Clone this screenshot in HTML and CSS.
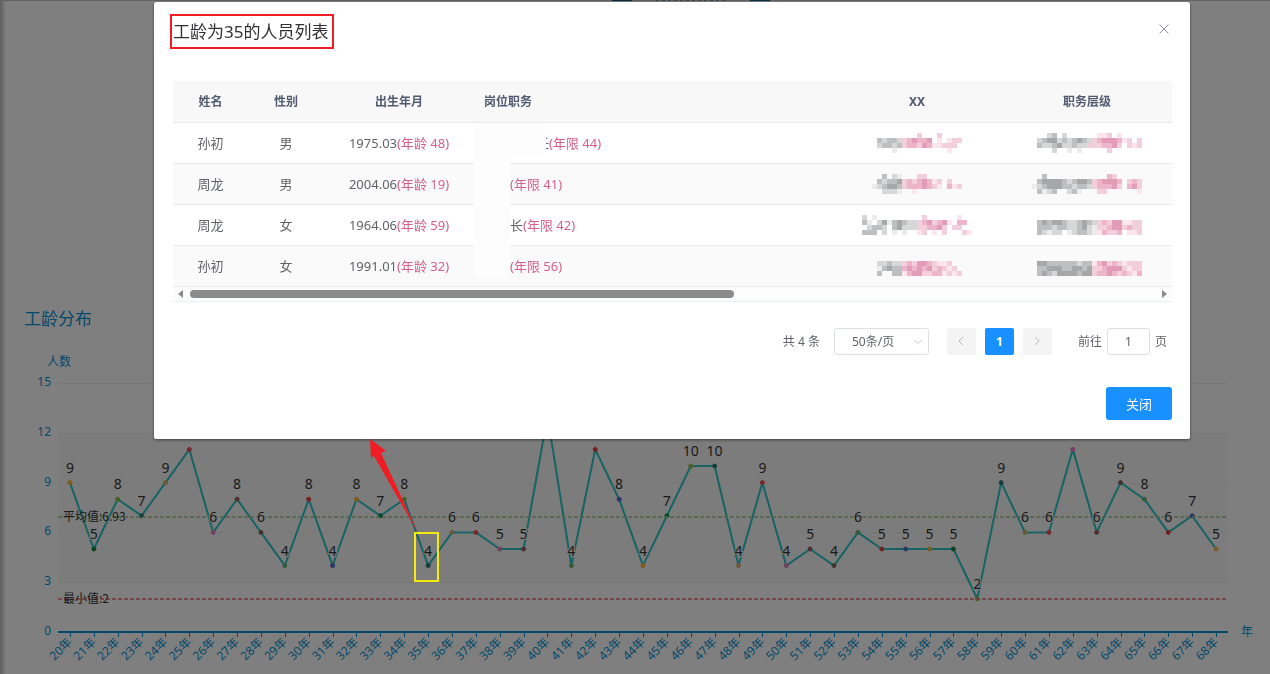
FILE: index.html
```html
<!DOCTYPE html>
<html lang="zh-CN">
<head>
<meta charset="utf-8">
<title>工龄分布</title>
<link rel="stylesheet" href="styles.css">
</head>
<body>
<main class="dashboard">
  <div class="banner-edge"><i class="tab"></i><i class="ticks"></i><i class="tab"></i></div>
  <section class="panel">
    <h2 class="panel-title">工龄分布</h2>
    <svg class="chart" id="chart" role="img" aria-label="工龄分布折线图"></svg>
  </section>
</main>

<div class="overlay">
  <div class="dialog" role="dialog" aria-modal="true" aria-labelledby="dialog-title">
    <header class="dialog-header">
      <h1 class="dialog-title" id="dialog-title">工龄为35的人员列表</h1>
      <button class="dialog-close" type="button" aria-label="关闭窗口">
        <svg width="12" height="12" viewBox="0 0 12 12"><path d="M1.5 1.5 10.5 10.5M10.5 1.5 1.5 10.5"/></svg>
      </button>
    </header>

    <div class="table-wrap">
      <table class="people">
        <colgroup><col class="c-name"><col class="c-sex"><col class="c-birth"><col class="c-post"><col class="c-xx"><col class="c-level"></colgroup>
        <thead>
          <tr><th>姓名</th><th>性别</th><th>出生年月</th><th class="left">岗位职务</th><th>XX</th><th>职务层级</th></tr>
        </thead>
        <tbody>
          <tr><td>孙初</td><td>男</td><td>1975.03<em>(年龄 48)</em></td><td class="left"><span class="post wide">任</span><em>(年限 44)</em></td><td><svg class="mosaic" data-key="x1"></svg></td><td><svg class="mosaic" data-key="l1"></svg></td></tr>
          <tr><td>周龙</td><td>男</td><td>2004.06<em>(年龄 19)</em></td><td class="left"><span class="post">长</span><em>(年限 41)</em></td><td><svg class="mosaic" data-key="x2"></svg></td><td><svg class="mosaic" data-key="l2"></svg></td></tr>
          <tr><td>周龙</td><td>女</td><td>1964.06<em>(年龄 59)</em></td><td class="left"><span class="post"></span>长<em>(年限 42)</em></td><td><svg class="mosaic" data-key="x3"></svg></td><td><svg class="mosaic" data-key="l3"></svg></td></tr>
          <tr><td>孙初</td><td>女</td><td>1991.01<em>(年龄 32)</em></td><td class="left"><span class="post">长</span><em>(年限 56)</em></td><td><svg class="mosaic" data-key="x4"></svg></td><td><svg class="mosaic" data-key="l4"></svg></td></tr>
        </tbody>
      </table>
      <div class="eraser tall"></div>
      <div class="eraser long"></div>
      <div class="scrollbar">
        <svg width="6" height="8" viewBox="0 0 6 8"><path d="M5 0V8L0 4Z"/></svg>
        <div class="track"><div class="thumb"></div></div>
        <svg width="6" height="8" viewBox="0 0 6 8"><path d="M1 0V8L6 4Z"/></svg>
      </div>
    </div>

    <nav class="pager" aria-label="分页">
      <span class="total">共 4 条</span>
      <span class="size-box">
        <select class="size" aria-label="每页条数"><option>50条/页</option></select>
        <svg width="8" height="6" viewBox="0 0 8 6"><path d="M0.5 1 4 4.5 7.5 1"/></svg>
      </span>
      <button class="page" type="button" aria-label="上一页"><svg width="6" height="10" viewBox="0 0 6 10"><path d="M5 1 1 5 5 9"/></svg></button>
      <button class="page current" type="button">1</button>
      <button class="page" type="button" aria-label="下一页"><svg width="6" height="10" viewBox="0 0 6 10"><path d="M1 1 5 5 1 9"/></svg></button>
      <label class="jump">前往<input type="text" value="1">页</label>
    </nav>

    <footer class="dialog-footer"><button class="primary" type="button">关闭</button></footer>
  </div>
</div>

<div class="focus-box"></div>
<svg class="arrow" width="52" height="96" viewBox="0 0 52 96"><path d="M0 0 16 12 11 14 48 94 4 17 1 19Z"/></svg>
<script src="main.js"></script>
</body>
</html>
```

FILE: styles.css
```css
* { box-sizing: border-box; }
body {
  margin: 0;
  background: #fff;
  color: #606266;
  font-family: "Noto Sans", "Noto Sans CJK SC", sans-serif;
  font-size: 13px;
}
button, input, select { font-family: inherit; }

/* dashboard */
.dashboard {
  display: flex;
  flex-direction: column;
  justify-content: space-between;
  min-height: 100vh;
  background: linear-gradient(90deg, #b8bac0, #fff 6px);
}
.banner-edge {
  display: flex;
  justify-content: center;
  gap: 24px;
  height: 1px;
  padding-left: 112px;
  background: #c4c4c4;
}
.banner-edge .tab { width: 20px; background: #0b5c86; }
.banner-edge .ticks { width: 70px; background: repeating-linear-gradient(90deg, #6a8ea4 0 3px, #c4c4c4 3px 6px); }
.panel-title {
  margin: 0;
  padding-left: 24px;
  color: #0892d2;
  font-size: 17px;
  font-weight: 400;
  line-height: 24px;
}
.panel { display: flex; flex-direction: column; gap: 19px; }
.chart { display: block; width: 100%; height: 324px; }
.chart .area { fill: #f8f8f8; }
.chart .grid { stroke: #eee; }
.chart .axis { stroke: #0892d2; stroke-width: 2; }
.chart .tick { stroke: #0892d2; }
.chart .axis-text { fill: #0892d2; font-size: 12px; }
.chart .series { fill: none; stroke: #2ec7c9; stroke-width: 2; stroke-linejoin: round; }
.chart .avg { stroke: #a4cc8c; stroke-width: 2; stroke-dasharray: 4 2; stroke-opacity: .8; }
.chart .min { stroke: #e8707c; stroke-width: 2; stroke-dasharray: 4 2; stroke-opacity: .8; }
.chart .mark-text { fill: #333; font-family: "Noto Sans CJK SC", sans-serif; font-size: 12px; }
.chart .value { fill: #333; font-size: 14px; stroke: #fafafa; stroke-width: 2; paint-order: stroke; }

/* dialog */
.overlay {
  position: fixed;
  inset: 0;
  padding: 2px 80px 0 154px;
  background: rgba(0, 0, 0, .5);
}
.dialog {
  padding: 12px 18px 19px 16px;
  background: #fff;
  border-radius: 2px;
  box-shadow: 0 1px 3px rgba(0, 0, 0, .5);
}
.dialog-header { display: flex; justify-content: space-between; align-items: flex-start; }
.dialog-title {
  margin: 0;
  padding: 1px 4px 0 1px;
  border: 2px solid #f01c24;
  color: #303133;
  font-size: 17px;
  font-weight: 400;
  line-height: 30px;
}
.dialog-close { display: flex; margin: 9px 2px 0 0; padding: 0; border: 0; background: none; }
.dialog-close svg { fill: none; stroke: #909399; }

.table-wrap { position: relative; margin: 32px 0 0 3px; }
.people { width: 100%; border-collapse: collapse; table-layout: fixed; }
.people th, .people td {
  height: 41px;
  padding: 0;
  border-bottom: 1px solid #e3eaf1;
  text-align: center;
  line-height: 20px;
  font-weight: 400;
  white-space: nowrap;
}
.people th { padding-top: 2px; background: #f8f8f8; color: #515a6e; font-size: 12px; font-weight: 700; }
.people tbody tr:nth-child(even) { background: #fafafa; }
.people .left { padding-left: 10px; text-align: left; }
.people em { color: #d4608a; font-style: normal; }
.c-name { width: 75px; }
.c-sex { width: 76px; }
.c-birth { width: 150px; }
.c-xx, .c-level { width: 170px; }
.post { display: inline-flex; justify-content: flex-end; width: 26px; height: 20px; vertical-align: top; }
.post.wide { width: 65px; }
.eraser { position: absolute; left: 301px; background: #fdfdfd; border-radius: 4px; }
.eraser.tall { top: 46px; width: 36px; height: 151px; }
.eraser.long { top: 46px; width: 72px; height: 28px; }
.mosaic { display: block; width: 110px; height: 20px; margin: 0 auto; }

.scrollbar {
  display: flex;
  align-items: center;
  gap: 6px;
  height: 15px;
  padding: 0 5px;
  border-bottom: 1px solid #ebf0f5;
  background: #fcfcfc;
}
.scrollbar svg { fill: #8a8a8a; }
.track { flex: 1; }
.thumb { width: 56.4%; height: 8px; border-radius: 4px; background: #8b8b8b; }

.pager {
  display: flex;
  justify-content: flex-end;
  align-items: center;
  gap: 9px;
  margin-top: 26px;
  padding-right: 5px;
  font-size: 12px;
  line-height: 27px;
}
.total { margin-right: 5px; }
.size-box { position: relative; display: flex; margin-right: 9px; }
.size-box svg { position: absolute; top: 11px; right: 7px; fill: none; stroke: #c0c4cc; }
.size {
  width: 95px;
  height: 27px;
  padding: 0 17px;
  border: 1px solid #dcdfe6;
  border-radius: 3px;
  appearance: none;
  background: #fff;
  color: #606266;
  font-size: 12px;
}
.page {
  display: flex;
  align-items: center;
  justify-content: center;
  width: 29px;
  height: 27px;
  padding: 0;
  border: 0;
  border-radius: 2px;
  background: #f4f4f5;
  font-size: 12px;
}
.page svg { fill: none; stroke: #b4b8c0; }
.page.current { background: #1890ff; color: #fff; font-weight: 700; }
.jump { display: flex; gap: 5px; margin-left: 17px; }
.jump input {
  width: 43px;
  height: 27px;
  padding: 0;
  border: 1px solid #dcdfe6;
  border-radius: 3px;
  color: #606266;
  font-size: 12px;
  text-align: center;
}
.dialog-footer { display: flex; justify-content: flex-end; margin-top: 32px; }
.primary {
  width: 66px;
  height: 33px;
  padding: 0;
  border: 0;
  border-radius: 3px;
  background: #1890ff;
  color: #fff;
  font-size: 13px;
}

/* annotations */
.focus-box { position: absolute; left: 414px; top: 532px; width: 25px; height: 50px; border: 2px solid #f4ea10; }
.arrow { position: absolute; left: 370px; top: 439px; fill: #f01c24; }
```

FILE: main.js
```js
const NS = 'http://www.w3.org/2000/svg';
function add(parent, tag, attrs, text) {
  const el = document.createElementNS(NS, tag);
  for (const k in attrs) el.setAttribute(k, attrs[k]);
  if (text !== undefined) el.textContent = text;
  parent.appendChild(el);
  return el;
}

const FIRST_YEAR = 20;
const counts = [9, 5, 8, 7, 9, 11, 6, 8, 6, 4, 8, 4, 8, 7, 8, 4, 6, 6, 5, 5, 13, 4, 11, 8, 4,
  7, 10, 10, 4, 9, 4, 5, 4, 6, 5, 5, 5, 5, 2, 9, 6, 6, 11, 6, 9, 8, 6, 7, 5];
const colors = ['#fcb738', '#108848', '#8cc850', '#2c7c7c', '#d2b470', '#f05058',
  '#e080c0', '#9c6060', '#806858', '#68b878', '#f03c3c', '#5868d0'];

function drawChart() {
  const svg = document.getElementById('chart');
  svg.replaceChildren();
  const left = 58, right = svg.clientWidth - 42, base = 282, unit = 16.6;
  const step = (right - left) / counts.length;
  const px = i => left + step * (i + 0.5);
  const py = v => base - v * unit;

  add(svg, 'rect', { class: 'area', x: left, y: py(12), width: right - left, height: unit * 9 });
  for (let v = 0; v <= 15; v += 3) {
    const y = Math.round(py(v));
    if (v) add(svg, 'line', { class: 'grid', x1: left, x2: right, y1: y + 0.5, y2: y + 0.5 });
    add(svg, 'text', { class: 'axis-text', x: 51, y: y + 3, 'text-anchor': 'end' }, v);
  }
  add(svg, 'line', { class: 'axis', x1: left, x2: right, y1: base, y2: base });
  add(svg, 'text', { class: 'axis-text', x: 59, y: 16, 'text-anchor': 'middle' }, '人数');
  add(svg, 'text', { class: 'axis-text', x: right + 13, y: base + 4 }, '年');

  counts.forEach((v, i) => {
    const x = Math.round(px(i)) + 0.5;
    add(svg, 'line', { class: 'tick', x1: x, x2: x, y1: base, y2: base + 5 });
    add(svg, 'text', { class: 'axis-text', 'text-anchor': 'end', y: 4,
      transform: `translate(${px(i)} ${base + 8}) rotate(-45)` }, `${FIRST_YEAR + i}年`);
  });

  add(svg, 'polyline', { class: 'series', points: counts.map((v, i) => `${px(i)},${py(v)}`).join(' ') });
  counts.forEach((v, i) => add(svg, 'circle', { cx: px(i), cy: py(v), r: 2, fill: colors[i % 12], stroke: colors[i % 12] }));
  [['avg', 6.93, '平均值:6.93'], ['min', 2, '最小值:2']].forEach(([name, v, label]) => {
    const y = Math.round(py(v));
    add(svg, 'line', { class: name, x1: left, x2: right, y1: y, y2: y });
    add(svg, 'text', { class: 'mark-text', x: left + 5, y: y + 4 }, label);
  });
  counts.forEach((v, i) => {
    if (v < 11) add(svg, 'text', { class: 'value', x: px(i), y: py(v) - 10, 'text-anchor': 'middle' }, v);
  });
}

const shades = { 1: '#ececec', 2: '#d6d7d7', 3: '#bebfc0', 4: '#a6a7a9',
  a: '#fae6ec', b: '#f3cedb', c: '#ecb5c8', d: '#e29cb8' };
const mosaics = {
  x1: ['...........b...b......', '...32332bcdccd.a.abb..', '...23323bccbdcaabbb...', '......1..........a....'],
  x2: ['....3.21...bb.........', '...32334bcbcdcab.b....', '..123443bcccdcba.cab..', '....2221..a...........'],
  x3: ['2.1.........b......a..', '31.24134322bcdbcda.cc.', '.2332.34222bbccdb.bb..', '333.2.1.1..ab.a.b...ba'],
  x4: ['', '...22322bcbddcbaab....', '...13433cdcdcdbcbab...', '...3..33acddbbccabab..'],
  l1: ['...23.2......aab.a....', '.23442323432bcdddcab.b', '.3223422322bbbccdb.bab', '....2..1.1.....b......'],
  l2: ['..3............cb.....', '.34444323443bcdddc.bcb', '123444332332bcccdb.cdb', '.3123..231...bb......a'],
  l3: ['', '.343443223432bcbddaabb', '.333233223421bbcddbcbb', '.32122.123321acbbc.aab'],
  l4: ['', '.44333333233acdbcbabbb', '.33444334434bbcdddbabb', '.34324444344bccdcbcbac']
};
document.querySelectorAll('.mosaic').forEach(svg => {
  mosaics[svg.dataset.key].forEach((row, y) => [...row].forEach((c, x) => {
    if (shades[c]) add(svg, 'rect', { x: x * 5, y: y * 5, width: 5, height: 5, fill: shades[c] });
  }));
});

drawChart();
window.addEventListener('resize', drawChart);
```
